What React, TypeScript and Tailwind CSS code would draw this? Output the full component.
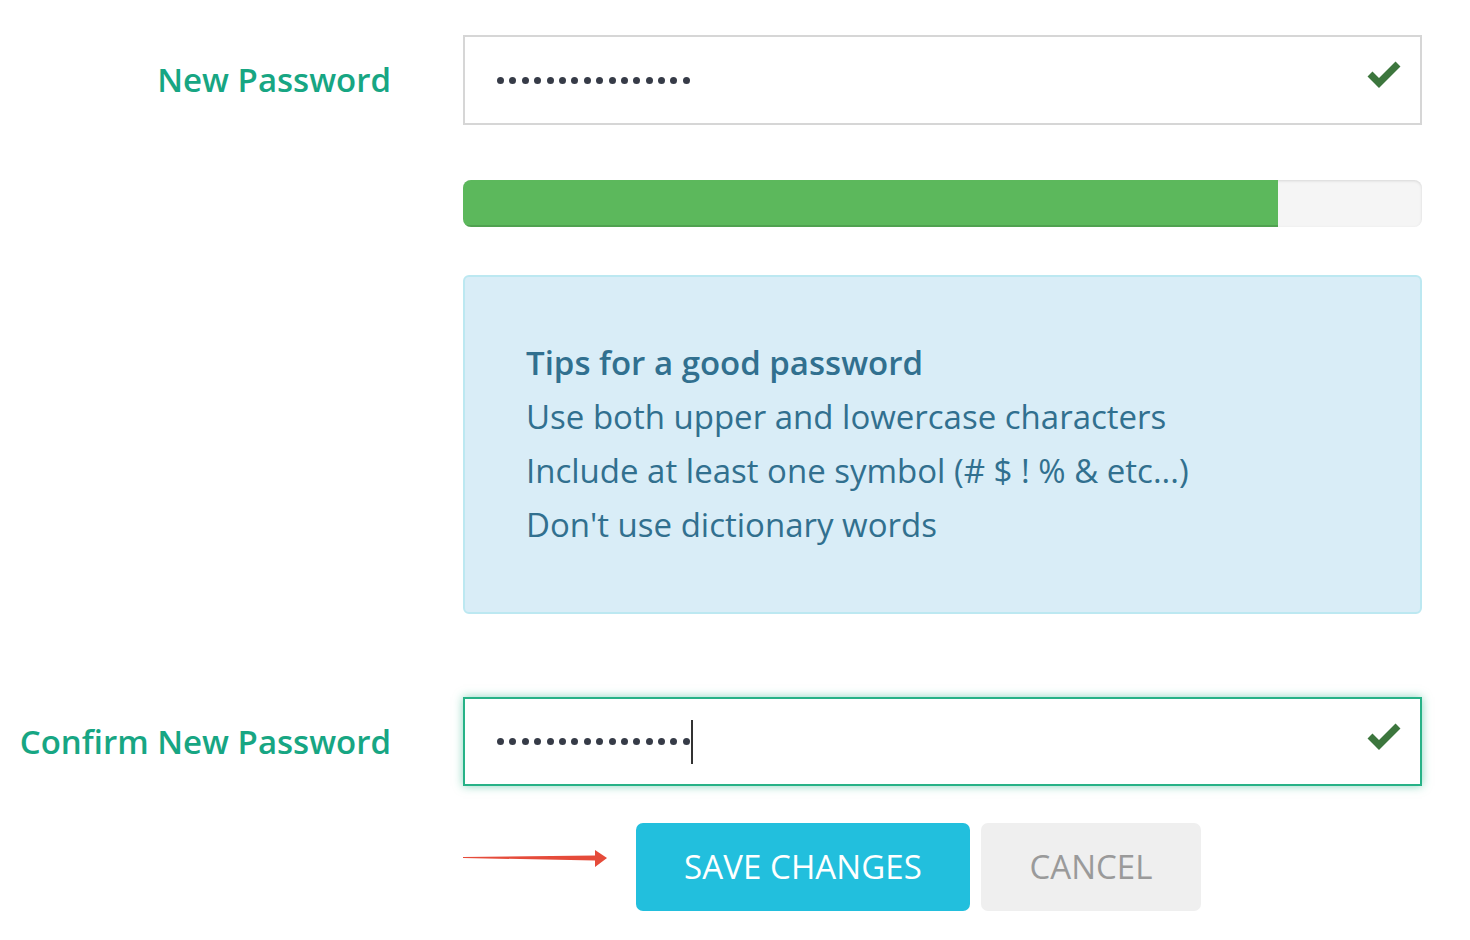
const CheckIcon = () => (
  <svg width="36" height="32" viewBox="0 0 36 32" className="shrink-0">
    <polyline points="4,17 13,26 32,7" fill="none" stroke="#3c763d" strokeWidth="7" strokeLinejoin="miter" strokeLinecap="butt" />
  </svg>
);

const Dots = ({ caret = false }: { caret?: boolean }) => (
  <div className="flex items-center">
    <div className="flex items-center gap-[5.4px]">
      {Array.from({ length: 16 }).map((_, i) => (
        <span key={i} className="block w-[7px] h-[7px] rounded-full bg-[#363b47]" />
      ))}
    </div>
    {caret && <span className="block w-[2px] h-[44px] bg-[#333] ml-[1px]" />}
  </div>
);

const Label = ({ children }: { children: string }) => (
  <div className="w-[391px] shrink-0 text-right text-[33px] font-semibold text-[#17a683]">
    {children}
  </div>
);

const Arrow = () => (
  <svg width="145" height="24" viewBox="0 0 145 24" className="shrink-0 -mt-[18px]">
    <polygon points="0,11 132,9.5 132,4 144,12 132,21 132,14.5 0,12" fill="#e54b3a" />
  </svg>
);

export default function App() {
  return (
    <div className="w-[1470px] h-[940px] bg-white pt-[35px]" style={{ fontFamily: '"Open Sans", "Liberation Sans", sans-serif' }}>
      <div className="flex items-center">
        <Label>New Password</Label>
        <div className="ml-[72px] w-[959px] h-[90px] border-2 border-[#d6d6d6] flex items-center justify-between pl-[32px] pr-[18px]">
          <Dots />
          <div className="-mt-[14px]"><CheckIcon /></div>
        </div>
      </div>

      <div className="ml-[463px] w-[959px] mt-[55px] h-[47px] rounded-[8px] bg-[#f5f5f5] shadow-[inset_0_1px_3px_rgba(0,0,0,0.12)] overflow-hidden flex">
        <div className="h-full w-[85%] bg-[#5cb85c] shadow-[inset_0_-2px_0_rgba(0,0,0,0.12)]" />
      </div>

      <div className="ml-[463px] w-[959px] mt-[48px] rounded-[6px] border-2 border-[#bce8f1] bg-[#d9edf7] text-[#31708f] pl-[61px] pt-[59px] pb-[60px] text-[33px] leading-[54px]">
        <div className="font-semibold">Tips for a good password</div>
        <div>Use both upper and lowercase characters</div>
        <div>Include at least one symbol (# $ ! % &amp; etc...)</div>
        <div>Don't use dictionary words</div>
      </div>

      <div className="flex items-center mt-[83px]">
        <Label>Confirm New Password</Label>
        <div className="ml-[72px] w-[959px] h-[89px] border-2 border-[#27b287] shadow-[0_0_9px_rgba(39,178,135,0.55)] flex items-center justify-between pl-[32px] pr-[18px]">
          <Dots caret />
          <div className="-mt-[14px]"><CheckIcon /></div>
        </div>
      </div>

      <div className="flex items-center mt-[37px] ml-[463px]">
        <Arrow />
        <button className="ml-[28px] w-[334px] h-[88px] rounded-[7px] bg-[#22bfdd] text-white text-[33px] tracking-[0.1px] uppercase">
          Save Changes
        </button>
        <button className="ml-[11px] w-[220px] h-[88px] rounded-[7px] bg-[#efefef] text-[#9a9a9a] text-[33px] uppercase">
          Cancel
        </button>
      </div>
    </div>
  );
}
